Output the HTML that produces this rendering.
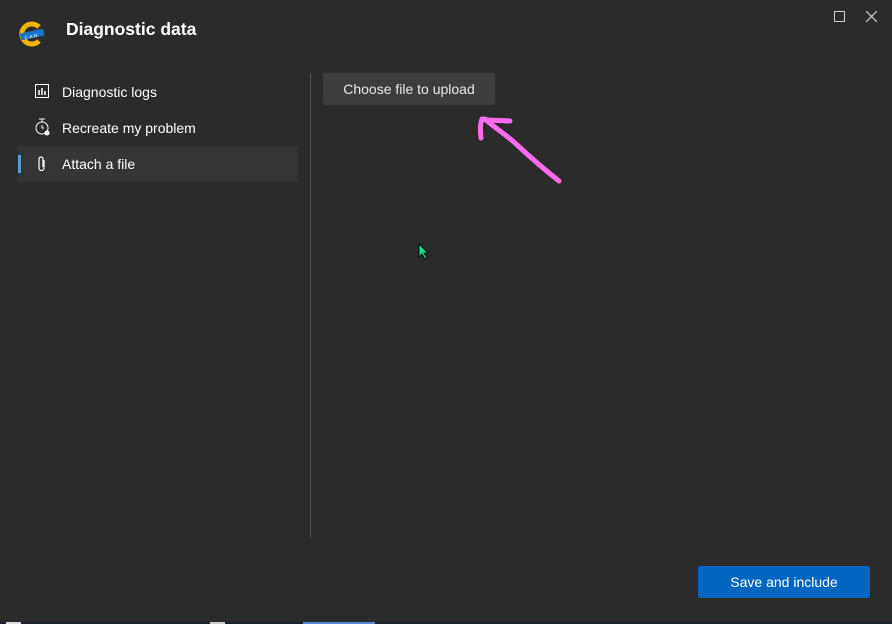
<!DOCTYPE html>
<html><head><meta charset="utf-8"><style>
html,body{margin:0;padding:0;width:892px;height:624px;overflow:hidden;background:#2b2b2b;font-family:"Segoe UI","Liberation Sans",sans-serif;color:#fff;position:relative}
.abs{position:absolute}
.title{left:66px;top:19px;font-size:17.5px;font-weight:bold}
.item{left:18px;width:280px;height:36px;font-size:14px;line-height:36px}
.item span{position:absolute;left:44px}
.sel{background:#353535}
.bar{left:0;top:9px;width:3px;height:18px;background:#5a9bd5;position:absolute}
.vline{left:310px;top:73px;width:1px;height:465px;background:#555}
.btn{left:323px;top:73px;width:172px;height:32px;background:#3d3d3d;border-radius:2px;font-size:14px;line-height:32px;text-align:center;color:#e8e8e8}
.save{left:698px;top:566px;width:172px;height:32px;background:#0067c0;border-radius:2px;font-size:14px;line-height:32px;text-align:center}
</style></head><body>
<svg class="abs" style="left:18px;top:20px" width="28" height="28" viewBox="0 0 28 28">
<path d="M21 7 A10 10 0 1 0 21 21" fill="none" stroke="#f2b400" stroke-width="5"/>
<rect x="2" y="11" width="24" height="7" rx="2" fill="#1a73c8" transform="rotate(-12 14 14)"/>
<text x="6" y="18" font-size="5" fill="#fff" font-family="Liberation Sans" transform="rotate(-12 14 14)">C A N</text>
</svg>
<div class="abs title">Diagnostic data</div>
<svg class="abs" style="left:834px;top:11px" width="11" height="11"><rect x="0.5" y="0.5" width="10" height="10" fill="none" stroke="#ccc"/></svg>
<svg class="abs" style="left:866px;top:11px" width="11" height="11"><path d="M0 0L11 11M11 0L0 11" stroke="#ccc" stroke-width="1.2"/></svg>

<div class="abs item" style="top:74px"><svg class="abs" style="left:17px;top:10px" width="14" height="14"><rect x="0.5" y="0.5" width="13" height="13" fill="none" stroke="#fff"/><path d="M4 11V6M7 11V4M10 11V7" stroke="#fff" stroke-width="1.5"/></svg><span>Diagnostic logs</span></div>
<div class="abs item" style="top:110px"><svg class="abs" style="left:16px;top:8px" width="16" height="18"><path d="M5 1H11M8 1V4" stroke="#fff"/><circle cx="8" cy="10" r="6" fill="none" stroke="#fff"/><path d="M8 7V10H10" stroke="#fff" fill="none"/><circle cx="13" cy="15" r="2.5" fill="#fff"/></svg><span>Recreate my problem</span></div>
<div class="abs item sel" style="top:146px"><div class="bar"></div><svg class="abs" style="left:19px;top:9px" width="10" height="18"><path d="M7 5V13A2.5 2.5 0 0 1 2 13V4A2 2 0 0 1 6 4V12" fill="none" stroke="#fff" stroke-width="1.2"/></svg><span>Attach a file</span></div>

<div class="abs vline"></div>
<div class="abs btn">Choose file to upload</div>
<svg class="abs" style="left:470px;top:110px" width="100" height="80"><path d="M11 28C10 20 10 14 12 9C18 11 30 10 40 11M15 9C25 18 35 24 45 33C60 47 75 60 89 71" fill="none" stroke="#ff6bf0" stroke-width="5" stroke-linecap="round" stroke-linejoin="round"/></svg>
<svg class="abs" style="left:418px;top:243px" width="12" height="17"><path d="M1 1L1 14L4 11L7 16L9 15L6 10L10 10Z" fill="#1bd88a" stroke="#000" stroke-width="0.8"/></svg>
<div class="abs save">Save and include</div>
<div class="abs" style="left:0;top:622px;width:892px;height:2px;background:#1c2230"></div>
<div class="abs" style="left:6px;top:622px;width:15px;height:2px;background:#ddd"></div>
<div class="abs" style="left:210px;top:622px;width:15px;height:2px;background:#ccc"></div>
<div class="abs" style="left:303px;top:622px;width:72px;height:2px;background:#5a8ad0"></div>
</body></html>
